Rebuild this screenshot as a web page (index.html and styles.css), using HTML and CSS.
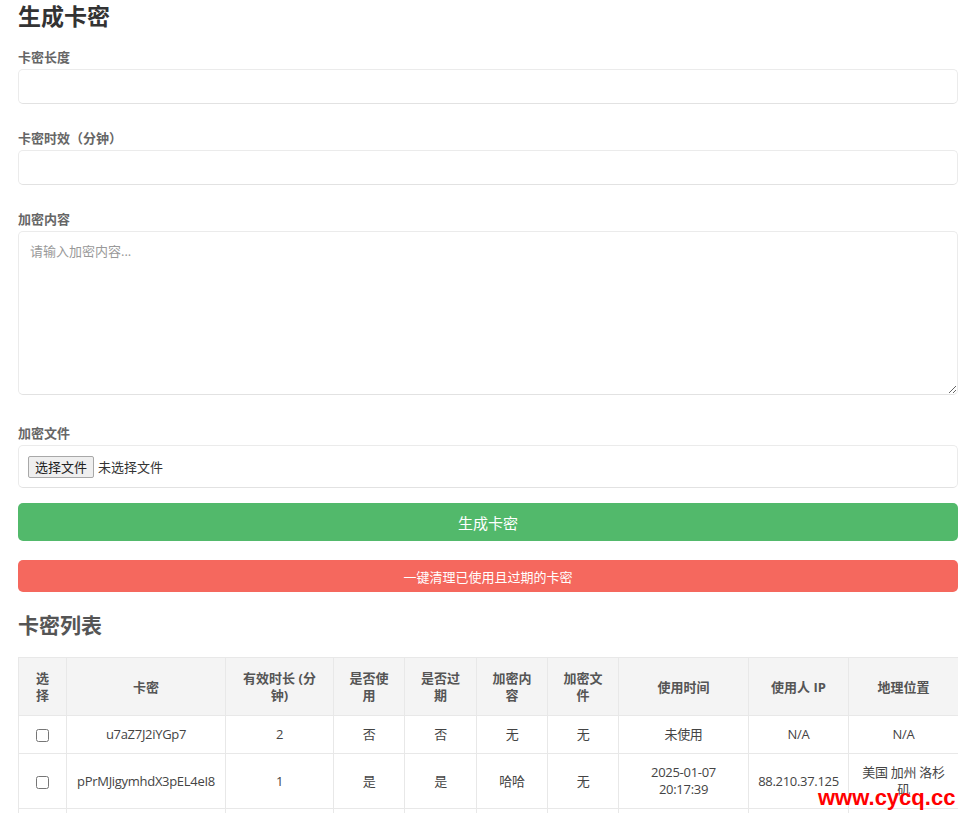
FILE: index.html
```html
<!DOCTYPE html>
<html lang="zh-CN">
<head>
    <meta charset="UTF-8">
    <meta name="viewport" content="width=device-width, initial-scale=1.0">
    <title>生成卡密</title>
    <link rel="stylesheet" href="styles.css">
</head>
<body>

    <div class="container">
        <!-- 생성 폼 -->
        <h2 class="title">生成卡密</h2>

        <div class="form-group">
            <label class="label" for="len">卡密长度</label>
            <input type="text" id="len" class="input">
        </div>

        <div class="form-group">
            <label class="label" for="mins">卡密时效（分钟）</label>
            <input type="text" id="mins" class="input">
        </div>

        <div class="form-group group-area">
            <label class="label" for="content">加密内容</label>
            <textarea id="content" class="area" placeholder="请输入加密内容..."></textarea>
        </div>

        <div class="form-group group-file">
            <label class="label">加密文件</label>
            <div class="file-box">
                <input type="file" id="file" class="file-hidden">
                <label for="file" class="file-btn">选择文件</label>
                <span class="file-name">未选择文件</span>
            </div>
        </div>

        <button class="btn btn-green">生成卡密</button>
        <button class="btn btn-red">一键清理已使用且过期的卡密</button>

        <!-- 목록 -->
        <h2 class="title title2">卡密列表</h2>

        <table class="list">
            <colgroup>
                <col style="width:48px">
                <col style="width:159px">
                <col style="width:108px">
                <col style="width:71px">
                <col style="width:72px">
                <col style="width:71px">
                <col style="width:71px">
                <col style="width:130px">
                <col style="width:100px">
                <col style="width:110px">
            </colgroup>
            <thead>
                <tr>
                    <th>选择</th>
                    <th>卡密</th>
                    <th>有效时长 (分钟)</th>
                    <th>是否使用</th>
                    <th>是否过期</th>
                    <th>加密内容</th>
                    <th>加密文件</th>
                    <th>使用时间</th>
                    <th>使用人 IP</th>
                    <th>地理位置</th>
                </tr>
            </thead>
            <tbody>
                <tr>
                    <td><input type="checkbox"></td>
                    <td>u7aZ7J2iYGp7</td>
                    <td>2</td>
                    <td>否</td>
                    <td>否</td>
                    <td>无</td>
                    <td>无</td>
                    <td>未使用</td>
                    <td>N/A</td>
                    <td>N/A</td>
                </tr>
                <tr>
                    <td><input type="checkbox"></td>
                    <td>pPrMJigymhdX3pEL4eI8</td>
                    <td>1</td>
                    <td>是</td>
                    <td>是</td>
                    <td>哈哈</td>
                    <td>无</td>
                    <td>2025-01-07 20:17:39</td>
                    <td>88.210.37.125</td>
                    <td>美国 加州 洛杉矶</td>
                </tr>
                <tr>
                    <td><input type="checkbox"></td>
                    <td>Xk29dLq0WmP3</td>
                    <td>5</td>
                    <td>否</td>
                    <td>否</td>
                    <td>无</td>
                    <td>无</td>
                    <td>未使用</td>
                    <td>N/A</td>
                    <td>N/A</td>
                </tr>
            </tbody>
        </table>
    </div>

    <div class="watermark">www.cycq.cc</div>

</body>
</html>
```

FILE: styles.css
```css
html, body{
    margin: 0;
    padding: 0;
    overflow-x: hidden;
    background: #fff;
}

body{
    font-family: "Open Sans", "Noto Sans CJK SC", sans-serif;
    font-size: 13px;
    color: #444;
}

.container{
    width: 940px;
    padding-left: 18px;
    padding-bottom: 40px;
}

.title{
    margin: 0;
    font-size: 23px;
    line-height: 32px;
    font-weight: bold;
    color: #333;
}

.title2{
    margin-top: 17px;
    font-size: 21px;
    color: #555;
}

.form-group{
    margin-top: 16px;
}

.form-group + .form-group{
    margin-top: 25px;
}

.group-file.form-group{
    margin-top: 29px;
}

.label{
    display: block;
    font-size: 13px;
    line-height: 18px;
    font-weight: bold;
    color: #666;
    margin-bottom: 3px;
}

.input,
.area,
.file-box{
    display: block;
    box-sizing: border-box;
    width: 100%;
    border: 1px solid #ebebeb;
    border-bottom-color: #e2e2e2;
    border-radius: 5px;
    background: #fff;
    outline: 0;
    font-family: inherit;
    font-size: 13px;
}

.input{
    height: 35px;
    padding: 0 11px;
}

.area{
    height: 164px;
    padding: 10px 11px;
    color: #333;
    line-height: 18px;
}

.area::placeholder{
    color: #999;
}

/* 파일 선택 */
.file-box{
    height: 43px;
    padding: 0 9px;
    display: flex;
    align-items: center;
    gap: 4px;
}

.file-hidden{
    display: none;
}

.file-btn{
    box-sizing: border-box;
    height: 22px;
    padding: 0 6px;
    line-height: 20px;
    border: 1px solid #a8a8a8;
    border-radius: 2px;
    background: #efefef;
    color: #222;
    font-size: 13px;
}

.file-name{
    color: #333;
    font-size: 13px;
}

.btn{
    display: block;
    width: 100%;
    border: 0;
    border-radius: 5px;
    color: #fff;
    font-family: inherit;
    cursor: pointer;
}

.btn-green{
    margin-top: 15px;
    height: 38px;
    font-size: 15px;
    background-color: #52b96b;
}

.btn-red{
    margin-top: 19px;
    height: 32px;
    font-size: 13px;
    background-color: #f5685e;
}

/* 표 */
.list{
    margin-top: 16px;
    width: 940px;
    table-layout: fixed;
    border-collapse: collapse;
}

.list th,
.list td{
    border: 1px solid #e8e8e8;
    text-align: center;
    line-height: 17px;
    word-break: break-word;
}

.list th{
    padding: 12px 12px 11px;
    background: #f4f4f4;
    color: #555;
    font-weight: bold;
}

.list td{
    padding: 10px 8px;
    color: #444;
    letter-spacing: -0.3px;
}

.list td:last-child{
    padding-left: 12px;
    padding-right: 12px;
}

.list input[type=checkbox]{
    margin: 0;
    vertical-align: middle;
}

.watermark{
    position: absolute;
    left: 818px;
    top: 785px;
    font-family: "Liberation Sans", Arial, sans-serif;
    font-weight: bold;
    font-size: 22px;
    color: #ff0000;
}
```
